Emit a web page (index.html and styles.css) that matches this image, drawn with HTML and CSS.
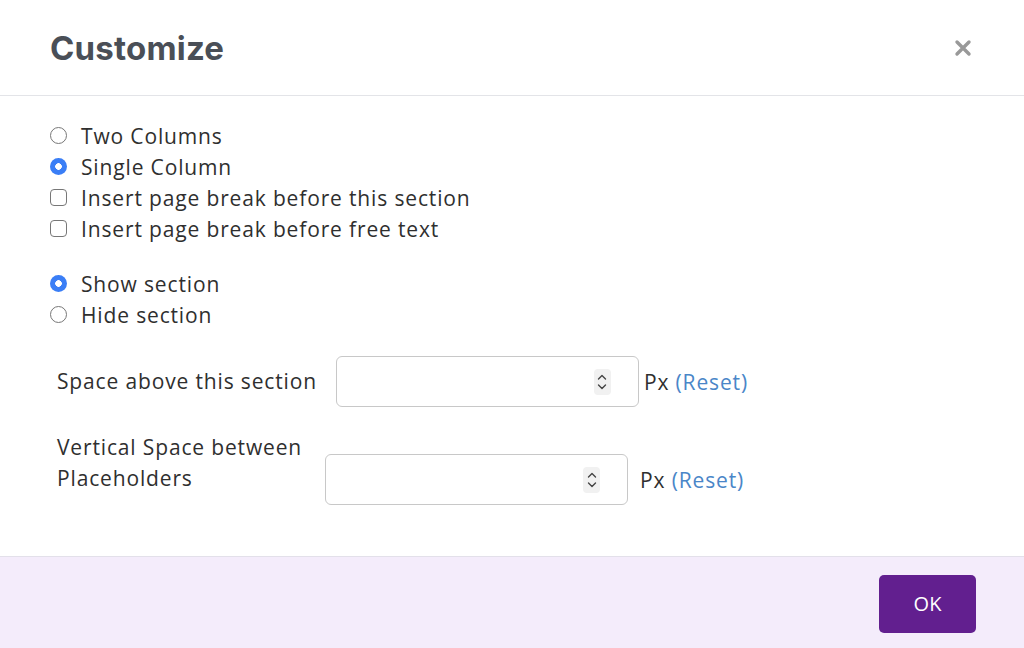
FILE: index.html
```html
<!DOCTYPE html>
<html lang="en">
<head>
  <meta charset="UTF-8" />
  <meta name="viewport" content="width=device-width, initial-scale=1.0" />
  <title>Customize</title>
  <link rel="stylesheet" href="styles.css">
</head>
<body>
  <div class="dialog">
    <header class="dialog-head">
      <h1 class="dialog-title">Customize</h1>
      <button class="close-btn" aria-label="Close">
        <svg width="20" height="20" viewBox="0 0 20 20">
          <path d="M4 4 L16 16 M16 4 L4 16" stroke="#999" stroke-width="3.4" stroke-linecap="round" fill="none" />
        </svg>
      </button>
    </header>

    <main class="dialog-body">
      <div class="option-group">
        <label class="option"><input type="radio" name="layout" /> Two Columns</label>
        <label class="option"><input type="radio" name="layout" checked /> Single Column</label>
        <label class="option"><input type="checkbox" /> Insert page break before this section</label>
        <label class="option"><input type="checkbox" /> Insert page break before free text</label>
      </div>

      <div class="option-group">
        <label class="option"><input type="radio" name="visible" checked /> Show section</label>
        <label class="option"><input type="radio" name="visible" /> Hide section</label>
      </div>

      <div class="field-row">
        <span class="field-label">Space above this section</span>
        <div class="num-field">
          <input type="text" />
          <span class="spinner">
            <svg width="12" height="22" viewBox="0 0 12 22">
              <path d="M2.5 8 L6 4.5 L9.5 8 M2.5 14 L6 17.5 L9.5 14" stroke="#444" stroke-width="1.4" stroke-linecap="round" stroke-linejoin="round" fill="none" />
            </svg>
          </span>
        </div>
        <span class="unit">Px <a href="#" class="reset">(Reset)</a></span>
      </div>

      <div class="field-row wrap">
        <span class="field-label narrow">Vertical Space between Placeholders</span>
        <div class="num-field">
          <input type="text" />
          <span class="spinner">
            <svg width="12" height="22" viewBox="0 0 12 22">
              <path d="M2.5 8 L6 4.5 L9.5 8 M2.5 14 L6 17.5 L9.5 14" stroke="#444" stroke-width="1.4" stroke-linecap="round" stroke-linejoin="round" fill="none" />
            </svg>
          </span>
        </div>
        <span class="unit">Px <a href="#" class="reset">(Reset)</a></span>
      </div>
    </main>

    <footer class="dialog-foot">
      <button class="ok-btn">OK</button>
    </footer>
  </div>
</body>
</html>
```

FILE: styles.css
```css
body {
  margin: 0;
  padding: 0;
  background-color: white;
  color: #2f2f2f;
  font-family: "Open Sans", "Noto Sans", sans-serif;
}

.dialog {
  width: 1024px;
  height: 648px;
  display: flex;
  flex-direction: column;
  background-color: white;
}

.dialog-head {
  height: 95px;
  display: flex;
  align-items: center;
  justify-content: space-between;
  padding: 0 48px 0 50px;
  border-bottom: 1px solid #e3e4e8;
}

.dialog-title {
  margin: 0;
  font-family: Inter, "Open Sans", sans-serif;
  font-size: 33px;
  font-weight: 700;
  letter-spacing: 0.2px;
  color: #4a4f57;
}

.close-btn {
  background: none;
  border: none;
  padding: 0;
  width: 26px;
  height: 26px;
  display: flex;
  align-items: center;
  justify-content: center;
  cursor: pointer;
}

.dialog-body {
  flex: 1;
  padding: 24px 50px 0 50px;
}

.option-group {
  display: flex;
  flex-direction: column;
  margin-bottom: 24px;
}

.option {
  display: flex;
  align-items: center;
  height: 31px;
  font-size: 21px;
  letter-spacing: 0.85px;
}

.option input {
  appearance: none;
  -webkit-appearance: none;
  margin: 0 14px 0 0;
  width: 17px;
  height: 17px;
  border: 1.6px solid #777;
  background-color: white;
  flex-shrink: 0;
}

.option input[type="radio"] {
  border-radius: 50%;
}

.option input[type="checkbox"] {
  border-radius: 4px;
}

.option input[type="radio"]:checked {
  border: none;
  background-color: #3a7ef6;
  background-image: radial-gradient(circle, white 0, white 3px, transparent 3.6px);
}

.field-row {
  display: flex;
  align-items: center;
  padding-left: 7px;
  margin-bottom: 25px;
}

.option-group + .field-row {
  margin-top: 26px;
}

.field-row.wrap {
  align-items: flex-start;
}

.field-label {
  font-size: 21px;
  line-height: 31px;
  letter-spacing: 0.85px;
  margin-right: 19px;
}

.field-label.narrow {
  width: 249px;
}

.num-field {
  height: 49px;
  border: 1px solid #c8c8c8;
  border-radius: 6px;
  display: flex;
  align-items: center;
  padding-right: 27px;
  box-sizing: content-box;
  width: 274px;
}

.field-row.wrap .num-field {
  margin-top: 22px;
}

.num-field input {
  flex: 1;
  min-width: 0;
  border: none;
  outline: none;
  background: none;
  height: 100%;
  padding: 0 12px;
  font-size: 18px;
}

.spinner {
  width: 17px;
  height: 26px;
  background-color: #f1f1f1;
  border-radius: 4px;
  display: flex;
  align-items: center;
  justify-content: center;
}

.unit {
  margin-left: 5px;
  font-size: 21px;
  letter-spacing: 0.85px;
}

.field-row.wrap .unit {
  margin-left: 12px;
  margin-top: 34px;
}

.reset {
  color: #4a86c8;
  text-decoration: none;
}

.dialog-foot {
  height: 92px;
  display: flex;
  align-items: center;
  justify-content: flex-end;
  padding: 2px 48px 0 48px;
  box-sizing: border-box;
  background-color: #f4ecfb;
  border-top: 1px solid #e3e0ea;
}

.ok-btn {
  width: 97px;
  height: 58px;
  background-color: #621f8f;
  color: white;
  border: none;
  border-radius: 5px;
  font-family: "Open Sans", sans-serif;
  font-size: 20px;
  cursor: pointer;
}
```
